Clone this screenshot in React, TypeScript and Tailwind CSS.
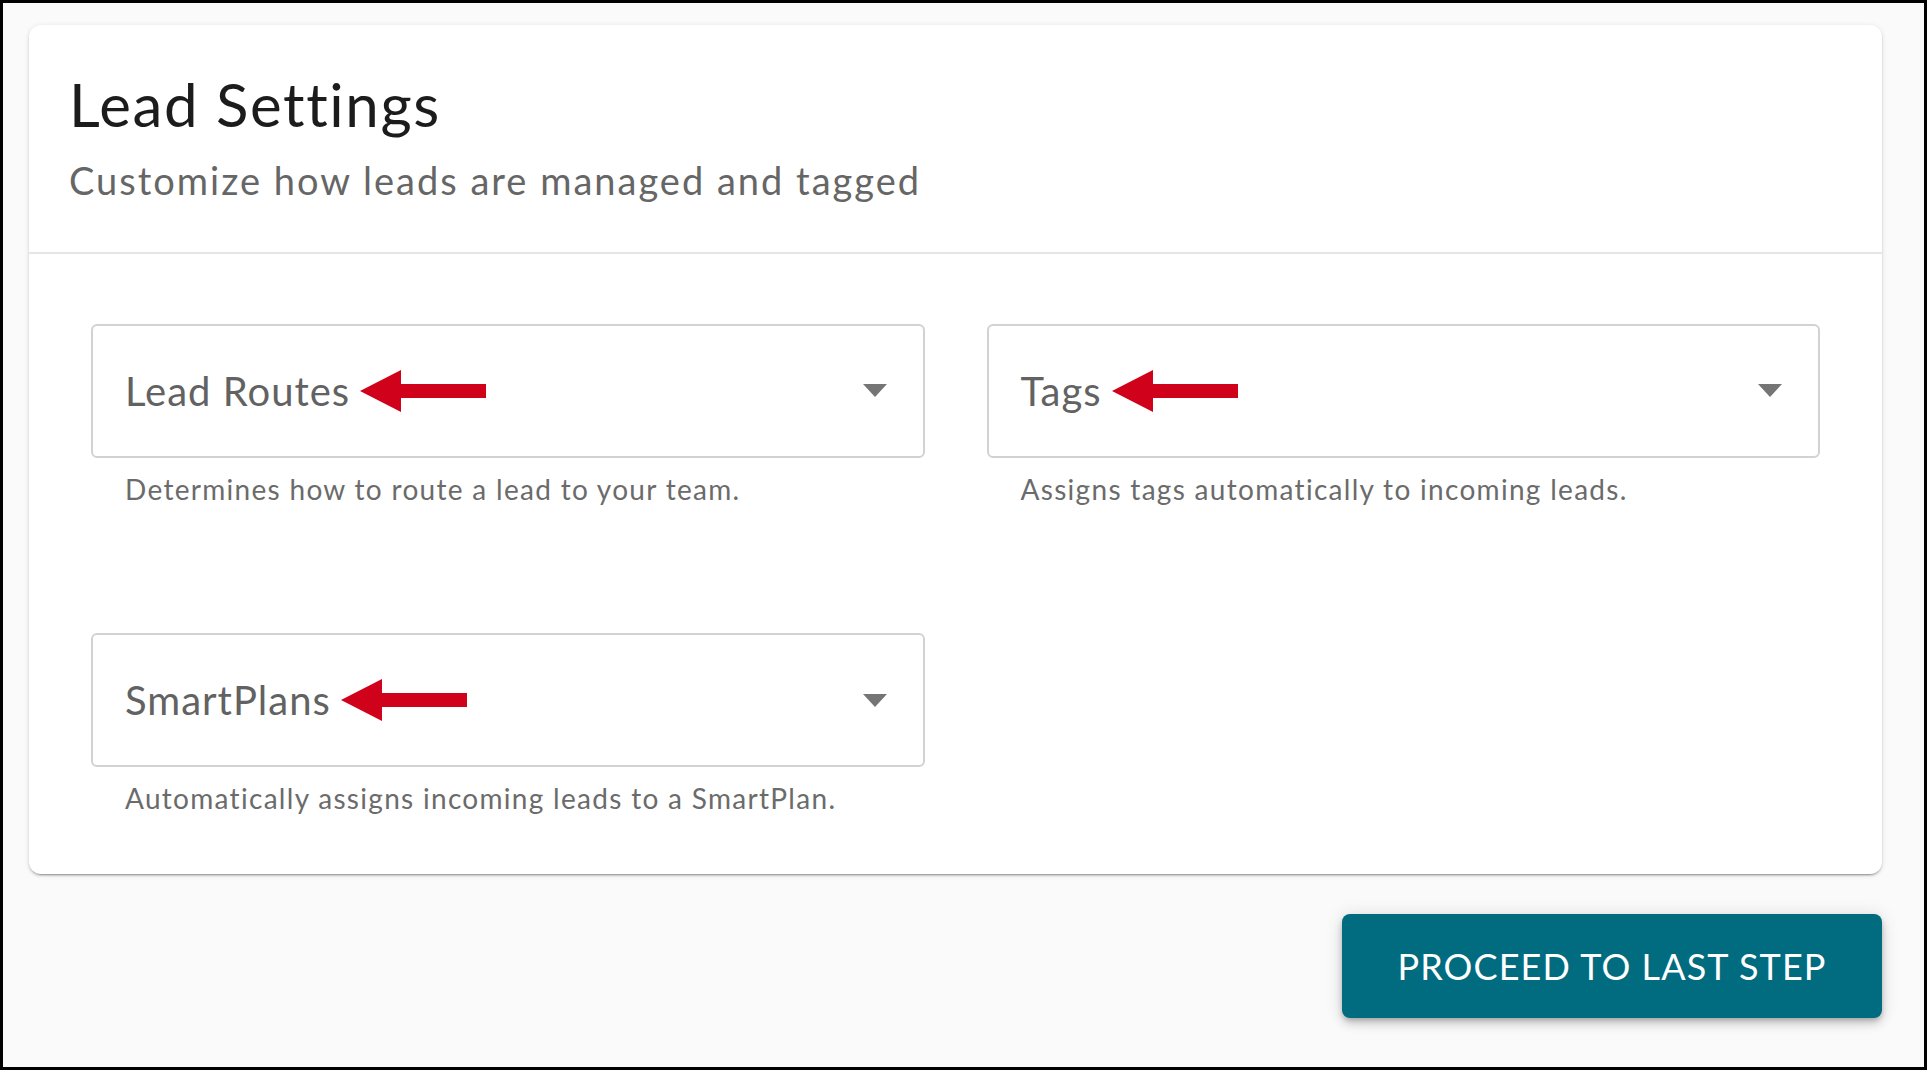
import React from 'react'

const fields = [
  { label: 'Lead Routes', help: 'Determines how to route a lead to your team.' },
  { label: 'Tags', help: 'Assigns tags automatically to incoming leads.' },
  { label: 'SmartPlans', help: 'Automatically assigns incoming leads to a SmartPlan.' },
]

function RedArrow() {
  return (
    <svg width="126" height="42" viewBox="0 0 126 42" className="ml-[10px] shrink-0">
      <polygon points="0,21 41,0 41,14 126,14 126,28 41,28 41,42" fill="#d0021b" />
    </svg>
  )
}

function Caret() {
  return (
    <svg width="24" height="13" viewBox="0 0 24 13" className="ml-auto shrink-0">
      <polygon points="0,0 24,0 12,13" fill="#757575" />
    </svg>
  )
}

function SelectField({ label, help }: { label: string; help: string }) {
  return (
    <div>
      <div className="h-[134px] rounded-[6px] border-2 border-[#d2d2d2] bg-white flex items-center pl-[32px] pr-[36px]">
        <span className="text-[40px] leading-none tracking-[1px] text-[#626262]">{label}</span>
        <RedArrow />
        <Caret />
      </div>
      <p className="mt-[15px] pl-[34px] text-[28px] leading-[1.2] tracking-[1.3px] text-[#6b6b6b]">{help}</p>
    </div>
  )
}

export default function App() {
  return (
    <div
      className="w-[1927px] h-[1070px] box-border border-[3px] border-black bg-[#fafafa] pt-[22px] pl-[26px] pr-[42px]"
      style={{ fontFamily: 'Lato, "Noto Sans", sans-serif' }}
    >
      {/* Settings card */}
      <div className="bg-white rounded-[12px] shadow-[0_3px_1px_-2px_rgba(0,0,0,0.2),0_2px_2px_0_rgba(0,0,0,0.14),0_1px_5px_0_rgba(0,0,0,0.12)]">
        <div className="pt-[43px] pb-[48px] pl-[40px] border-b-2 border-[#e6e6e6]">
          <h1 className="text-[60px] leading-[1.2] tracking-[1.6px] text-[#1c1c1c]">Lead Settings</h1>
          <p className="mt-[18px] text-[38px] leading-[1.2] tracking-[2px] text-[#666666]">Customize how leads are managed and tagged</p>
        </div>
        <div className="px-[62px] pt-[70px] pb-[58px] grid grid-cols-2 gap-x-[62px] gap-y-[127px]">
          {fields.map(f => (
            <SelectField key={f.label} label={f.label} help={f.help} />
          ))}
        </div>
      </div>

      <div className="mt-[40px] flex justify-end">
        <button className="w-[540px] h-[104px] rounded-[8px] bg-[#016b80] text-white text-[36px] uppercase tracking-[1.1px] shadow-[0_3px_5px_-1px_rgba(0,0,0,0.2),0_6px_10px_0_rgba(0,0,0,0.14),0_1px_18px_0_rgba(0,0,0,0.12)]">
          Proceed to last step
        </button>
      </div>
    </div>
  )
}
